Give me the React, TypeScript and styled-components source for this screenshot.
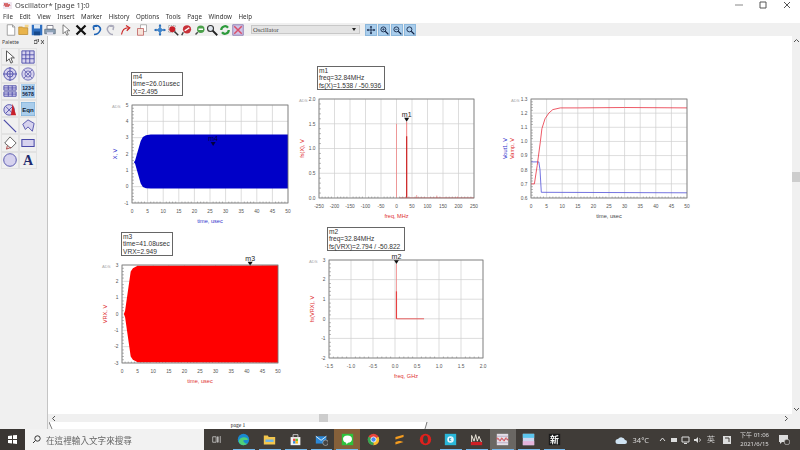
import React from 'react';
import styled, { createGlobalStyle } from 'styled-components';

const Global = createGlobalStyle`
  html, body { margin: 0; padding: 0; background: #fff; }
  body { width: 800px; height: 450px; overflow: hidden; font-family: "Noto Sans", "Liberation Sans", sans-serif; }
`;

const Window = styled.div`
  width: 800px;
  height: 450px;
  display: flex;
  flex-direction: column;
  overflow: hidden;
  filter: blur(0.3px);
`;

const TitleBar = styled.div`
  height: 10px;
  display: flex;
  align-items: center;
  gap: 3px;
  padding-left: 3px;
  font-size: 7.5px;
  color: #444;
  position: relative;
`;

const WinControls = styled.div`
  margin-left: auto;
  display: flex;
  gap: 16px;
  padding-right: 9px;
`;

const MenuBar = styled.div`
  height: 13px;
  display: flex;
  align-items: center;
  gap: 6.6px;
  padding-left: 3px;
  font-size: 6.2px;
  color: #333;
`;

const Toolbar = styled.div`
  height: 13px;
  background: #f0f0f0;
  display: flex;
  align-items: center;
  padding-left: 4.5px;
`;

const ToolSlot = styled.div<{ $ml?: number }>`
  width: 13px;
  height: 13px;
  margin-left: ${p => p.$ml ?? 0}px;
  display: flex;
  align-items: center;
  justify-content: center;
  flex: none;
`;

const CellSelect = styled.div`
  width: 109px;
  height: 9px;
  margin: 0 4.5px 0 6.5px;
  background: #e4e4e4;
  border: 1px solid #c8c8c8;
  box-sizing: border-box;
  display: flex;
  align-items: center;
  justify-content: space-between;
  padding: 0 3px 0 1px;
  font-family: "Liberation Serif", serif;
  font-size: 6.5px;
  color: #444;
  flex: none;
`;

const Body = styled.div`
  flex: 1;
  display: flex;
  min-height: 0;
`;

const Palette = styled.div`
  width: 47px;
  background: #f0f0f0;
  border-right: 1px solid #c4c4c4;
  flex: none;
`;

const PaletteHead = styled.div`
  height: 12px;
  display: flex;
  align-items: center;
  justify-content: space-between;
  padding: 0 3px 0 2px;
  font-size: 5.2px;
  color: #444;
`;

const PaletteGrid = styled.div`
  display: grid;
  grid-template-columns: 18px 18px;
  grid-auto-rows: 17.3px;
  padding: 0 0 0 1px;
`;

const PaletteCell = styled.div`
  display: flex;
  align-items: center;
  justify-content: center;
  border: 1px solid #e2e2e2;
  box-sizing: border-box;
`;

const RightColumn = styled.div`
  flex: 1;
  display: flex;
  flex-direction: column;
  min-width: 0;
`;

const CanvasRow = styled.div`
  flex: 1;
  display: flex;
  min-height: 0;
`;

const Canvas = styled.div`
  flex: 1;
  position: relative;
  background: #fff;
  overflow: hidden;
`;

const VScroll = styled.div`
  width: 8px;
  background: #f0f0f0;
  position: relative;
  flex: none;
`;

const VThumb = styled.div`
  position: absolute;
  top: 136px;
  left: 0;
  width: 8px;
  height: 10px;
  background: #cdcdcd;
`;

const ScrollArrow = styled.svg<{ $top?: number; $bottom?: number; $left?: number; $right?: number }>`
  position: absolute;
  ${p => (p.$top !== undefined ? `top: ${p.$top}px;` : '')}
  ${p => (p.$bottom !== undefined ? `bottom: ${p.$bottom}px;` : '')}
  ${p => (p.$left !== undefined ? `left: ${p.$left}px;` : '')}
  ${p => (p.$right !== undefined ? `right: ${p.$right}px;` : '')}
`;

const HScroll = styled.div`
  height: 8px;
  background: #f0f0f0;
  position: relative;
  flex: none;
`;

const HThumb = styled.div`
  position: absolute;
  left: 271px;
  top: 0;
  width: 9px;
  height: 8px;
  background: #cdcdcd;
`;

const TabRow = styled.div`
  height: 7px;
  display: flex;
  background: #f0f0f0;
  flex: none;
`;

const PageTab = styled.div`
  width: 376px;
  margin-left: 2px;
  background: #fff;
  position: relative;
  display: flex;
  justify-content: center;
  font-family: "Liberation Serif", serif;
  font-size: 5.5px;
  line-height: 7px;
  color: #222;
`;

const TabEdge = styled.svg<{ $side: 'left' | 'right' }>`
  position: absolute;
  top: 0;
  ${p => (p.$side === 'left' ? 'left: -1px;' : 'right: -2px;')}
`;

const Taskbar = styled.div`
  height: 21px;
  background: #403c38;
  display: flex;
  align-items: stretch;
  flex: none;
`;

const StartButton = styled.div`
  width: 25px;
  display: flex;
  align-items: center;
  justify-content: center;
  background: #3a3633;
`;

const SearchBox = styled.div`
  width: 179px;
  background: #f2f2f2;
  display: flex;
  align-items: center;
  gap: 5px;
  padding-left: 7px;
  box-sizing: border-box;
  font-family: "Noto Sans CJK TC", sans-serif;
  font-size: 8.6px;
  color: #666;
`;

const TaskIcons = styled.div`
  display: flex;
  padding-left: 1px;
`;

const TaskItem = styled.div<{ $state?: 'open' | 'active' | 'flash' }>`
  width: 25.9px;
  display: flex;
  align-items: center;
  justify-content: center;
  position: relative;
  background: ${p => (p.$state === 'active' ? '#6a6763' : p.$state === 'flash' ? '#85603a' : 'transparent')};
  &::after {
    content: '';
    display: ${p => (p.$state ? 'block' : 'none')};
    position: absolute;
    left: 2px;
    right: 2px;
    bottom: 0;
    height: 1px;
    background: #76b9ed;
  }
`;

const Tray = styled.div`
  margin-left: auto;
  display: flex;
  align-items: center;
  color: #ddd;
  font-size: 7.5px;
  padding-right: 10px;
`;

const TrayGlyph = styled.div<{ $ml: number }>`
  margin-left: ${p => p.$ml}px;
  display: flex;
  align-items: center;
  flex: none;
`;

const Clock = styled.div`
  font-size: 6px;
  line-height: 9px;
  text-align: center;
  font-family: "Noto Sans", "Noto Sans CJK TC", sans-serif;
`;

const Diagram = styled.svg<{ $x: number; $y: number }>`
  position: absolute;
  left: ${p => p.$x}px;
  top: ${p => p.$y}px;
`;

const MarkerBox = styled.div<{ $x: number; $y: number; $w: number }>`
  position: absolute;
  left: ${p => p.$x}px;
  top: ${p => p.$y}px;
  width: ${p => p.$w}px;
  height: 24px;
  box-sizing: border-box;
  border: 1px solid #666;
  background: #fff;
  padding: 0 0 0 1px;
  font-family: "Liberation Sans", sans-serif;
  font-size: 6.6px;
  line-height: 7.4px;
  color: #333;
  white-space: nowrap;
`;

/* ---- charts ---- */

interface PlotProps {
  x: number;
  y: number;
  w: number;
  h: number;
  xRange: [number, number];
  yRange: [number, number];
  xTicks: number[];
  yTicks: number[];
  yDigits?: number;
  xDigits?: number;
  xLabel: string;
  xColor: string;
  yLabels: { text: string; color: string }[];
  minorY?: number;
  draw: (sx: (v: number) => number, sy: (v: number) => number) => React.ReactNode;
}

const M = { left: 36, top: 12, right: 8, bottom: 26 };
const CANVAS_X = 48;
const CANVAS_Y = 36;

const Plot: React.FC<PlotProps> = ({ x, y, w, h, xRange, yRange, xTicks, yTicks, xDigits = 0, yDigits = 0, xLabel, xColor, yLabels, minorY = 5, draw }) => {
  const sx = (v: number) => ((v - xRange[0]) / (xRange[1] - xRange[0])) * w;
  const sy = (v: number) => h - ((v - yRange[0]) / (yRange[1] - yRange[0])) * h;
  const minor: number[] = [];
  for (let i = 0; i < yTicks.length - 1; i++) {
    for (let j = 1; j < minorY; j++) minor.push(yTicks[i] + ((yTicks[i + 1] - yTicks[i]) * j) / minorY);
  }
  const minorX: number[] = [];
  for (let i = 0; i < xTicks.length - 1; i++) {
    for (let j = 1; j < 5; j++) minorX.push(xTicks[i] + ((xTicks[i + 1] - xTicks[i]) * j) / 5);
  }
  const labelStart = yLabels.length > 1 ? -24 : -15;
  return (
    <Diagram $x={x - CANVAS_X - M.left} $y={y - CANVAS_Y - M.top} width={w + M.left + M.right} height={h + M.top + M.bottom}>
      <g transform={`translate(${M.left} ${M.top})`} fontFamily="Liberation Sans, sans-serif">
        <text x={-20} y={3} fontSize="4.2" fill="#aaa">ADS</text>
        {xTicks.map(t => <line key={t} x1={sx(t)} x2={sx(t)} y1={0} y2={h} stroke="#cfcfcf" strokeWidth="0.7" />)}
        {yTicks.map(t => <line key={t} x1={0} x2={w} y1={sy(t)} y2={sy(t)} stroke="#cfcfcf" strokeWidth="0.7" />)}
        {minor.map(t => <line key={t} x1={0} x2={2} y1={sy(t)} y2={sy(t)} stroke="#777" strokeWidth="0.5" />)}
        {minorX.map(t => <line key={t} x1={sx(t)} x2={sx(t)} y1={h} y2={h - 1.5} stroke="#777" strokeWidth="0.5" />)}
        {draw(sx, sy)}
        <rect x={0} y={0} width={w} height={h} fill="none" stroke="#777" strokeWidth="0.8" />
        {xTicks.map(t => <text key={t} x={sx(t)} y={h + 9.5} fontSize="4.8" fill="#555" textAnchor="middle">{t.toFixed(xDigits)}</text>)}
        {yTicks.map(t => <text key={t} x={-3.5} y={sy(t) + 1.8} fontSize="4.8" fill="#555" textAnchor="end">{t.toFixed(yDigits)}</text>)}
        <text x={w / 2} y={h + 20} fontSize="5.6" fill={xColor} textAnchor="middle">{xLabel}</text>
        {yLabels.map((l, i) => (
          <text key={l.text} transform={`translate(${labelStart + i * 7} ${h / 2}) rotate(-90)`} fontSize="5.6" fill={l.color} textAnchor="middle">{l.text}</text>
        ))}
      </g>
    </Diagram>
  );
};

const range = (a: number, b: number, s: number) => {
  const r: number[] = [];
  for (let v = a; v <= b + s / 100; v += s) r.push(Math.round(v * 1000) / 1000);
  return r;
};

const envelope = (sx: (v: number) => number, sy: (v: number) => number, top: [number, number][], bottom: [number, number][]) =>
  [...top, ...[...bottom].reverse()].map(([a, b]) => `${sx(a).toFixed(1)},${sy(b).toFixed(1)}`).join(' ');

const polyline = (sx: (v: number) => number, sy: (v: number) => number, pts: [number, number][]) =>
  pts.map(([a, b]) => `${sx(a).toFixed(1)},${sy(b).toFixed(1)}`).join(' ');

const Mark: React.FC<{ x: number; y: number; label: string; color?: string }> = ({ x, y, label, color = '#111' }) => (
  <g>
    <text x={x} y={y - 5} fontSize="7" fill={color === '#111' ? '#222' : color} textAnchor="middle" fontFamily="Liberation Sans, sans-serif">{label}</text>
    <path d={`M${x - 2.5} ${y - 4}h5l-2.5 4z`} fill={color} />
  </g>
);

/* ---- toolbar icons ---- */

const Ico: React.FC<{ s?: number; children: React.ReactNode }> = ({ s = 12, children }) => (
  <svg width={s} height={s} viewBox="0 0 16 16" fill="none">{children}</svg>
);

const toolIcons: { ml: number; icon: React.ReactNode }[] = [
  { ml: 0, icon: <><path d="M3 1h7l3 3v11H3z" fill="#fff" stroke="#888" /><path d="M10 1v3h3" stroke="#888" /></> },
  { ml: 0, icon: <><path d="M1 4h5l1 1h6v9H1z" fill="#e9b44c" stroke="#b98a2e" /><path d="M9 1h5v3H9z" fill="#f4d58a" /></> },
  { ml: 0, icon: <><path d="M1 1h14v14H1z" fill="#2f6fc0" /><path d="M4 1h8v5H4z" fill="#dce8f5" /><path d="M4 10h8v5H4z" fill="#174a8c" /></> },
  { ml: 0, icon: <><path d="M4 2h8v5H4z" fill="#fff" stroke="#667" /><path d="M1 7h14v6H1z" fill="#8fa3b8" stroke="#5c6b7c" /><path d="M4 11h8v3H4z" fill="#dde" /></> },
  { ml: 3, icon: <path d="M4 1v12l3-3 2 5 2-1-2-5h4z" fill="#fff" stroke="#555" /> },
  { ml: 2, icon: <path d="M2 2l12 12M14 2L2 14" stroke="#111" strokeWidth="3" /> },
  { ml: 3, icon: <path d="M3 3c7-3 11 2 9 6s-5 5-8 5M3 3l1 5M3 3l5 0" stroke="#1c62b5" strokeWidth="2.2" /> },
  { ml: 0, icon: <path d="M13 3C7 0 3 5 5 9s4 5 7 5M13 3l-1 5M13 3l-5 0" stroke="#aab" strokeWidth="2" /> },
  { ml: 3, icon: <path d="M2 14c1-6 4-9 9-9M8 2l5 3-4 4" stroke="#c22" strokeWidth="1.6" /> },
  { ml: 3, icon: <><path d="M6 1h8v9H6z" fill="#fff" stroke="#999" /><path d="M2 6h8v9H2z" fill="#f7e2d8" stroke="#b55" /></> },
  { ml: 5, icon: <><path d="M8 1v14M1 8h14" stroke="#2a6db8" strokeWidth="2" /><circle cx="8" cy="8" r="3" fill="#3f87cf" /><path d="M8 0l2 3H6zM8 16l2-3H6zM0 8l3-2v4zM16 8l-3-2v4z" fill="#2a6db8" /></> },
  { ml: 0, icon: <><path d="M2 2h9v9H2z" stroke="#999" strokeDasharray="2 1" /><circle cx="7" cy="7" r="4" fill="#c8202a" /><path d="M10 10l5 5" stroke="#333" strokeWidth="2" /></> },
  { ml: 1, icon: <><circle cx="8" cy="7" r="5.5" fill="#c8323a" /><path d="M5 9l6-4" stroke="#fff" strokeWidth="2" /><path d="M3 11l-2 4" stroke="#444" strokeWidth="2" /></> },
  { ml: 0, icon: <><circle cx="9" cy="7" r="5" fill="#4aa04a" /><path d="M6 7h6" stroke="#fff" strokeWidth="2" /><path d="M5 11l-3 3" stroke="#444" strokeWidth="2" /></> },
  { ml: -1, icon: <><circle cx="6" cy="6" r="4" fill="#dfe6ee" stroke="#333" strokeWidth="1.5" /><path d="M9 9l6 6" stroke="#222" strokeWidth="2.4" /></> },
  { ml: 0, icon: <><path d="M3 8a5 5 0 0 1 9-3" stroke="#2d9a3c" strokeWidth="3" /><path d="M13 8a5 5 0 0 1-9 3" stroke="#2d9a3c" strokeWidth="3" /></> },
  { ml: 0, icon: <><path d="M1 1h14v14H1z" fill="#cfc3e6" stroke="#7c6aa8" /><path d="M3 3l10 10M13 3L3 13" stroke="#d9506a" strokeWidth="2" /></> },
];

const viewIcons: React.ReactNode[] = [
  <><path d="M8 2v12M2 8h12" stroke="#124" strokeWidth="1.3" /><path d="M8 1l2 3H6zM8 15l2-3H6zM1 8l3-2v4zM15 8l-3-2v4z" fill="#124" /></>,
  <><circle cx="7" cy="7" r="4" stroke="#124" strokeWidth="1.4" /><path d="M7 5v4M5 7h4" stroke="#124" /><path d="M10 10l5 5" stroke="#124" strokeWidth="2" /></>,
  <><circle cx="7" cy="7" r="4" stroke="#124" strokeWidth="1.4" /><path d="M5 7h4" stroke="#124" /><path d="M10 10l5 5" stroke="#124" strokeWidth="2" /></>,
  <><circle cx="7" cy="7" r="4" stroke="#124" strokeWidth="1.4" /><path d="M10 10l5 5" stroke="#124" strokeWidth="2" /></>,
];

const ViewBtn = styled.div`
  width: 12px;
  height: 12px;
  background: #a9cdec;
  border: 1px solid #8db8dc;
  box-sizing: border-box;
  display: flex;
  align-items: center;
  justify-content: center;
`;

/* ---- palette icons ---- */

const P = '#4a4aa8';
const PF = '#d6d2ee';
const paletteIcons: React.ReactNode[] = [
  <path d="M4 1v12l3-3 2 5 2-1-2-5h4z" fill="#fff" stroke="#444" />,
  <><path d="M1 1h14v14H1z" fill={PF} stroke={P} /><path d="M1 5.5h14M1 10h14M5.5 1v14M10 1v14" stroke={P} /></>,
  <><circle cx="8" cy="8" r="7" fill={PF} stroke={P} /><circle cx="8" cy="8" r="3.5" stroke={P} /><path d="M8 0v16M0 8h16" stroke={P} /></>,
  <><circle cx="8" cy="8" r="7" fill={PF} stroke="#6a68b4" /><circle cx="8" cy="8" r="3.5" stroke="#6a68b4" /><path d="M3 3l10 10M13 3L3 13" stroke="#6a68b4" /></>,
  <><path d="M1 2h14v5H1zM1 9h14v5H1z" fill={PF} stroke={P} /><path d="M6 2v5M10.5 2v5M6 9v5M10.5 9v5M1 4.5h14M1 11.5h14" stroke={P} /></>,
  <><path d="M0 0h16v16H0z" fill="#a9cdec" /><text x="8" y="7" fontSize="6" fontFamily="Liberation Sans, sans-serif" fontWeight="700" fill="#124" textAnchor="middle">1234</text><text x="8" y="14" fontSize="6" fontFamily="Liberation Sans, sans-serif" fontWeight="700" fill="#124" textAnchor="middle">5678</text></>,
  <><circle cx="7" cy="9" r="6" fill={PF} stroke={P} /><path d="M3 5l8 8M11 5l-8 8" stroke={P} /><path d="M11 2l4 13H9z" fill="#c8202a" /></>,
  <><path d="M0 0h16v16H0z" fill="#a9cdec" stroke="#6fa3d0" /><text x="8" y="11" fontSize="7" fontFamily="Liberation Sans, sans-serif" fontWeight="700" fill="#123" textAnchor="middle">Eqn</text></>,
  <path d="M1 1l14 14" stroke={P} strokeWidth="1.4" />,
  <path d="M2 6l6-5 7 4-2 9-5-5-3 3z" fill={PF} stroke={P} />,
  <><path d="M8 1l7 7-6 6-7-6z" fill="#fff" stroke="#555" /><path d="M5 11l-1 4 5-2" stroke="#a33" /></>,
  <path d="M1 4h14v8H1z" fill={PF} stroke={P} strokeWidth="1.2" />,
  <circle cx="8" cy="8" r="7.2" fill={PF} stroke={P} />,
  <text x="8" y="14" fontSize="16" fontFamily="Liberation Serif, serif" fontWeight="700" fill="#1d2a6e" textAnchor="middle">A</text>,
];

/* ---- taskbar icons ---- */

const taskIcons: { state?: 'open' | 'active' | 'flash'; icon: React.ReactNode }[] = [
  { icon: <path d="M1 4h5v8H1zM8 4h1v8H8zM12 3v10" stroke="#ddd" fill="none" /> },
  { state: 'open', icon: <><circle cx="8" cy="8" r="7" fill="#1a8ad0" /><path d="M2 10c1-5 9-7 12-2-1 1-5 0-6 1s2 5 5 4c-4 4-10 2-11-3z" fill="#4ed07a" /></> },
  { state: 'open', icon: <><path d="M1 3h5l1 2h8v9H1z" fill="#f3c64d" /><path d="M3 8h10v3H3z" fill="#6db4e8" /></> },
  { state: 'open', icon: <><path d="M2 5h12v10H2z" fill="#f3f3f3" /><path d="M5 5V2h6v3" stroke="#ddd" /><path d="M5 7h3v3H5z" fill="#e44" /><path d="M8 7h3v3H8z" fill="#6b3" /><path d="M5 10h3v3H5z" fill="#38d" /><path d="M8 10h3v3H8z" fill="#fb1" /></> },
  { state: 'open', icon: <><path d="M1 4h13v9H1z" fill="#2b88d8" /><path d="M1 4l6.5 5L14 4" stroke="#fff" /><circle cx="13" cy="12" r="3.4" fill="#444" stroke="#ddd" strokeWidth=".6" /></> },
  { state: 'flash', icon: <><path d="M1 1h14v14H1z" fill="#2fc23c" /><ellipse cx="8" cy="7.5" rx="5.5" ry="4.5" fill="#fff" /><path d="M6 11h3l-2 3z" fill="#fff" /></> },
  { icon: <><circle cx="8" cy="8" r="7" fill="#e8453c" /><path d="M8 8L14 4.5A7 7 0 0 1 8 15z" fill="#f7c02c" /><path d="M8 8L8 15A7 7 0 0 1 1.8 4.6z" fill="#34a853" /><circle cx="8" cy="8" r="3.2" fill="#4a8af4" stroke="#fff" /></> },
  { icon: <path d="M3 5l10-3v3L3 8zM3 8l10 3-10 3v-3l5-1.5z" fill="#f59c1f" /> },
  { icon: <><circle cx="8" cy="8" r="7" fill="#e0201c" /><ellipse cx="8" cy="8" rx="3" ry="5" fill="#403c38" /></> },
  { state: 'open', icon: <><path d="M1 1h14v14H1z" fill="#2ab7d9" /><circle cx="8" cy="8" r="4" fill="#e8f8ff" /><path d="M7 6v4M7 8l2-2M7 8l2 2" stroke="#1a87a8" /></> },
  { state: 'open', icon: <><path d="M1 11h14v4H1z" fill="#cf1f25" /><path d="M2 11V3l3 7 2-8 2 8 2-6 3 7" stroke="#e9e3d8" strokeWidth="1.2" fill="none" /></> },
  { state: 'active', icon: <><path d="M1 1h14v14H1z" fill="#e5dfe8" /><path d="M1 4h14M1 8h14M1 12h14" stroke="#b3a9c4" /><path d="M1 8c2-7 3 7 5 0s3 7 5 0 3 4 4 0" stroke="#d33" fill="none" /></> },
  { state: 'open', icon: <><path d="M1 1h14v14H1z" fill="#cdd5ee" /><path d="M1 1h14v5H1z" fill="#5cc6ee" /><path d="M1 10h14v5H1z" fill="#e4b4dc" /></> },
  { state: 'open', icon: <><path d="M1 1h14v14H1z" fill="#1b1b1b" /><text x="8" y="12.5" fontSize="11" fill="#f2f2f2" fontFamily="Noto Sans CJK TC, sans-serif" fontWeight="700" textAnchor="middle">新</text></> },
];

const menus = ['File', 'Edit', 'View', 'Insert', 'Marker', 'History', 'Options', 'Tools', 'Page', 'Window', 'Help'];

export default function App() {
  return (
    <Window>
      <Global />
      <TitleBar>
        <svg width="9" height="8" viewBox="0 0 9 8"><path d="M0 1h9v7H0z" fill="#efe6f0" /><path d="M1 5l1-3 1 4 1-4 1 4 1-3 1 2" stroke="#c33" strokeWidth=".8" fill="none" /></svg>
        <span>Oscillator* [page 1]:0</span>
        <WinControls>
          <svg width="8" height="8"><path d="M0 4h8" stroke="#888" /></svg>
          <svg width="8" height="8"><path d="M1 1h6v6H1z" stroke="#555" fill="none" /></svg>
          <svg width="8" height="8"><path d="M1 1l6 6M7 1L1 7" stroke="#555" /></svg>
        </WinControls>
      </TitleBar>
      <MenuBar>
        {menus.map(m => <span key={m}>{m}</span>)}
      </MenuBar>
      <Toolbar>
        {toolIcons.map((t, i) => (
          <ToolSlot key={i} $ml={t.ml}>
            <Ico>{t.icon}</Ico>
          </ToolSlot>
        ))}
        <CellSelect>
          <span>Oscillator</span>
          <svg width="4" height="3"><path d="M0 0h4L2 3z" fill="#222" /></svg>
        </CellSelect>
        {viewIcons.map((icon, i) => (
          <ToolSlot key={i}>
            <ViewBtn><Ico s={10}>{icon}</Ico></ViewBtn>
          </ToolSlot>
        ))}
      </Toolbar>
      <Body>
        <Palette>
          <PaletteHead>
            <span>Palette</span>
            <svg width="10" height="6" viewBox="0 0 10 6"><path d="M0 1.5h3v3H0zM1.5 0h3v3" stroke="#333" fill="none" strokeWidth=".7" /><path d="M7 1l3 4M10 1L7 5" stroke="#333" strokeWidth=".8" /></svg>
          </PaletteHead>
          <PaletteGrid>
            {paletteIcons.map((icon, i) => (
              <PaletteCell key={i}><Ico s={14}>{icon}</Ico></PaletteCell>
            ))}
          </PaletteGrid>
        </Palette>
        <RightColumn>
          <CanvasRow>
            <Canvas>
              <Plot
                x={132} y={105} w={156} h={98}
                xRange={[0, 50]} yRange={[-1, 5]}
                xTicks={range(0, 50, 5)} yTicks={range(-1, 5, 1)}
                xLabel="time, usec" xColor="#3333cc"
                yLabels={[{ text: 'X, V', color: '#3333cc' }]}
                draw={(sx, sy) => (
                  <>
                    <polygon
                      fill="#0000c8"
                      points={envelope(sx, sy,
                        [[0.6, 1.5], [1, 1.6], [2.8, 2.8], [3.5, 3.05], [4.5, 3.15], [6, 3.2], [50, 3.2]],
                        [[0.6, 1.5], [1, 1.4], [2.8, 0.2], [3.5, -0.02], [4.5, -0.1], [6, -0.12], [50, -0.12]])}
                    />
                    <Mark x={sx(26)} y={sy(2.495)} label="m4" color="#000040" />
                  </>
                )}
              />
              <MarkerBox $x={83} $y={36} $w={52}>m4<br />time=26.01usec<br />X=2.495</MarkerBox>

              <Plot
                x={319} y={99} w={155} h={99}
                xRange={[-250, 250]} yRange={[0, 2]}
                xTicks={range(-250, 250, 50)} yTicks={[0, 0.5, 1, 1.5, 2]}
                yDigits={1}
                xLabel="freq, MHz" xColor="#e03030"
                yLabels={[{ text: 'fs(X), V', color: '#e03030' }]}
                draw={(sx, sy) => (
                  <>
                    <path d={`M${sx(0)} ${sy(0)}V${sy(1.5)}`} stroke="#f47a7a" strokeWidth="0.7" />
                    <path d={`M${sx(32.84)} ${sy(0)}V${sy(1.54)}`} stroke="#f06060" strokeWidth="0.8" />
                    <path d={`M${sx(32.84)} ${sy(0)}V${sy(1.25)}`} stroke="#c82020" strokeWidth="1.1" />
                    <path d={`M${sx(65)} ${sy(0)}V${sy(0.06)}M${sx(130)} ${sy(0)}V${sy(0.05)}M${sx(197)} ${sy(0)}V${sy(0.03)}`} stroke="#f07070" strokeWidth="0.6" />
                    <path d={`M${sx(10)} ${sy(0.005)}H${sx(250)}`} stroke="#f05050" strokeWidth="0.6" />
                    <Mark x={sx(32.84)} y={sy(1.538)} label="m1" />
                  </>
                )}
              />
              <MarkerBox $x={269} $y={30} $w={68}>m1<br />freq=32.84MHz<br />fs(X)=1.538 / -50.936</MarkerBox>

              <Plot
                x={531} y={99} w={156} h={99}
                xRange={[0, 50]} yRange={[0.6, 1.3]}
                xTicks={range(0, 50, 5)} yTicks={range(0.6, 1.3, 0.1)}
                yDigits={1}
                xLabel="time, usec" xColor="#444"
                yLabels={[{ text: 'Vout1, V', color: '#3333cc' }, { text: 'Vamp, V', color: '#e03030' }]}
                draw={(sx, sy) => (
                  <>
                    <polyline fill="none" stroke="#5050d8" strokeWidth="0.8" points={polyline(sx, sy, [[0, 0.855], [2.5, 0.855], [2.9, 0.8], [3.3, 0.64], [50, 0.637]])} />
                    <polyline fill="none" stroke="#e83040" strokeWidth="0.8" points={polyline(sx, sy, [[0, 0.7], [1.1, 0.7], [2, 0.83], [3, 1.0], [3.5, 1.09], [4.5, 1.16], [5.7, 1.2], [7, 1.225], [9.4, 1.237], [15, 1.237], [30, 1.24], [50, 1.237]])} />
                  </>
                )}
              />

              <Plot
                x={122} y={265} w={156} h={98}
                xRange={[0, 50]} yRange={[-3, 3]}
                xTicks={range(0, 50, 5)} yTicks={range(-3, 3, 1)}
                xLabel="time, usec" xColor="#e03030"
                yLabels={[{ text: 'VRX, V', color: '#e03030' }]}
                draw={(sx, sy) => (
                  <>
                    <polygon
                      fill="#ff0000"
                      points={envelope(sx, sy,
                        [[0.6, 0], [1, 0.2], [2.8, 2.6], [3.5, 2.8], [5, 2.95], [50, 2.98]],
                        [[0.6, 0], [1, -0.2], [2.8, -2.6], [3.5, -2.8], [5, -2.95], [50, -2.98]])}
                    />
                    <Mark x={sx(41.08)} y={sy(2.949)} label="m3" />
                  </>
                )}
              />
              <MarkerBox $x={73} $y={196} $w={52}>m3<br />time=41.08usec<br />VRX=2.949</MarkerBox>

              <Plot
                x={329} y={260} w={154} h={98}
                xRange={[-1.5, 2]} yRange={[-2, 3]}
                xTicks={range(-1.5, 2, 0.5)} yTicks={range(-2, 3, 1)}
                xDigits={1}
                xLabel="freq, GHz" xColor="#e03030"
                yLabels={[{ text: 'fs(VRX), V', color: '#e03030' }]}
                draw={(sx, sy) => (
                  <>
                    <path d={`M${sx(0.033)} ${sy(0)}V${sy(2.794)}`} stroke="#f08080" strokeWidth="0.8" />
                    <path d={`M${sx(0.033)} ${sy(0)}V${sy(1.4)}`} stroke="#e84040" strokeWidth="1.2" />
                    <path d={`M${sx(0.033)} ${sy(0)}H${sx(0.66)}`} stroke="#e85050" strokeWidth="0.9" />
                    <Mark x={sx(0.033)} y={sy(2.794)} label="m2" />
                  </>
                )}
              />
              <MarkerBox $x={279} $y={191} $w={78}>m2<br />freq=32.84MHz<br />fs(VRX)=2.794 / -50.822</MarkerBox>
            </Canvas>
            <VScroll>
              <ScrollArrow $top={3} $left={2} width="5" height="4"><path d="M0 3l2.5-2.5L5 3" stroke="#555" fill="none" /></ScrollArrow>
              <VThumb />
              <ScrollArrow $bottom={3} $left={2} width="5" height="4"><path d="M0 1l2.5 2.5L5 1" stroke="#555" fill="none" /></ScrollArrow>
            </VScroll>
          </CanvasRow>
          <HScroll>
            <ScrollArrow $top={2} $left={4} width="4" height="5"><path d="M3 0L0.5 2.5 3 5" stroke="#555" fill="none" /></ScrollArrow>
            <HThumb />
            <ScrollArrow $top={2} $right={12} width="4" height="5"><path d="M1 0l2.5 2.5L1 5" stroke="#555" fill="none" /></ScrollArrow>
          </HScroll>
          <TabRow>
            <PageTab>
              <TabEdge $side="left" width="4" height="7"><path d="M0 0l3 7" stroke="#444" strokeWidth=".7" /></TabEdge>
              <span>page 1</span>
              <TabEdge $side="right" width="4" height="7"><path d="M3 0L1 7" stroke="#444" strokeWidth=".7" /></TabEdge>
            </PageTab>
          </TabRow>
        </RightColumn>
      </Body>
      <Taskbar>
        <StartButton>
          <svg width="9" height="9" viewBox="0 0 9 9"><path d="M0 1l4-.6V4H0zM5 .3L9 0v4H5zM0 5h4v3.6L0 8zM5 5h4v4l-4-.6z" fill="#fff" /></svg>
        </StartButton>
        <SearchBox>
          <svg width="9" height="9" viewBox="0 0 9 9"><circle cx="5.5" cy="3.5" r="2.7" stroke="#333" fill="none" /><path d="M3.5 5.5L1 8" stroke="#333" /></svg>
          <span>在這裡輸入文字來搜尋</span>
        </SearchBox>
        <TaskIcons>
          {taskIcons.map((t, i) => (
            <TaskItem key={i} $state={t.state}><Ico s={i === 0 ? 11 : 13}>{t.icon}</Ico></TaskItem>
          ))}
        </TaskIcons>
        <Tray>
          <TrayGlyph $ml={0}><svg width="12" height="8" viewBox="0 0 12 8"><path d="M3 8a2.5 2.5 0 0 1 0-5 4 4 0 0 1 7 1 2 2 0 0 1 0 4z" fill="#cfe3f2" /></svg></TrayGlyph>
          <TrayGlyph $ml={6}>34°C</TrayGlyph>
          <TrayGlyph $ml={10}><svg width="7" height="5"><path d="M1 4l2.5-3L6 4" stroke="#ddd" fill="none" /></svg></TrayGlyph>
          <TrayGlyph $ml={3.5}><svg width="8" height="7"><path d="M1 2h6v4H1z" fill="#ddd" /></svg></TrayGlyph>
          <TrayGlyph $ml={3.5}><svg width="9" height="8"><path d="M1 1h7v5H1zM3 7.5h3" stroke="#ddd" fill="none" /></svg></TrayGlyph>
          <TrayGlyph $ml={3}><svg width="9" height="8"><path d="M1 3h2l2-2v6L3 5H1z" fill="#ddd" /><path d="M6.5 2.5c1 1 1 2 0 3" stroke="#ddd" fill="none" /></svg></TrayGlyph>
          <TrayGlyph $ml={5}>英</TrayGlyph>
          <TrayGlyph $ml={8}><svg width="8" height="8"><path d="M0 0h8v8H0z" fill="#ddd" /><path d="M2 2h4v4" stroke="#403c38" fill="none" /></svg></TrayGlyph>
          <TrayGlyph $ml={9}><Clock>下午 01:06<br />2021/6/15</Clock></TrayGlyph>
          <TrayGlyph $ml={10}><svg width="11" height="10" viewBox="0 0 11 10"><path d="M0 0h9v7H3L1 9V7H0z" fill="#ddd" /><circle cx="8" cy="7" r="2.8" fill="#403c38" stroke="#ddd" strokeWidth=".6" /></svg></TrayGlyph>
        </Tray>
      </Taskbar>
    </Window>
  );
}
